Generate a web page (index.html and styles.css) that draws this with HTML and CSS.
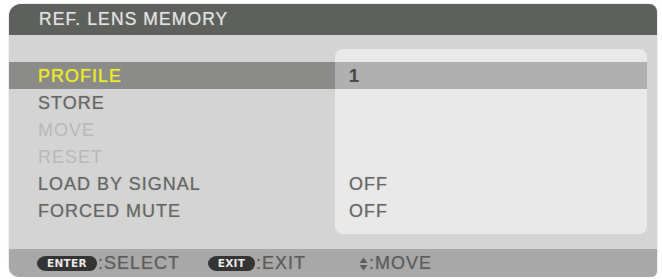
FILE: index.html
```html
<!DOCTYPE html>
<html>
<head>
<meta charset="utf-8">
<link rel="stylesheet" href="styles.css">
</head>
<body>
<div class="osd">
  <div class="title">REF. LENS MEMORY</div>
  <div class="content">
    <div class="labels">
      <div class="row label sel">PROFILE</div>
      <div class="row label">STORE</div>
      <div class="row label off">MOVE</div>
      <div class="row label off">RESET</div>
      <div class="row label">LOAD BY SIGNAL</div>
      <div class="row label">FORCED MUTE</div>
    </div>
    <div class="values">
      <div class="row value sel">1</div>
      <div class="row value"></div>
      <div class="row value"></div>
      <div class="row value"></div>
      <div class="row value">OFF</div>
      <div class="row value">OFF</div>
    </div>
  </div>
  <div class="footer">
    <span class="key key-enter">ENTER</span><span class="hint">:SELECT</span>
    <span class="key key-exit">EXIT</span><span class="hint">:EXIT</span>
    <span class="move-icon"><svg width="9" height="14" viewBox="0 0 9 14"><path d="M0.5 6 L4.5 0.5 L8.5 6 Z M0.5 8 L4.5 13.5 L8.5 8 Z" fill="#5c5c5c"/></svg></span><span class="hint">:MOVE</span>
  </div>
</div>
</body>
</html>
```
FILE: styles.css
```css
html, body {
  margin: 0;
  padding: 0;
  background: #ffffff;
}
body {
  padding: 4px 0 0 9px;
  font-family: "Liberation Sans", Arial, sans-serif;
}
.osd {
  width: 648px;
  height: 273px;
  border-radius: 12px 8px 6px 10px;
  overflow: hidden;
  background: #d3d4d3;
  display: flex;
  flex-direction: column;
  box-shadow: 0 0 2px rgba(0,0,0,0.25);
}
.title {
  height: 31px;
  flex: none;
  background: #5e605d;
  color: #e2e2e0;
  font-size: 17.5px;
  letter-spacing: 1.1px;
  line-height: 31px;
  padding-left: 30px;
  text-shadow: 0 0 1px rgba(230,230,230,0.6);
}
.content {
  height: 214px;
  flex: none;
  display: flex;
  padding: 14px 10px 0 0;
  box-sizing: border-box;
}
.labels {
  width: 326px;
  padding-top: 13px;
}
.values {
  width: 312px;
  height: 185px;
  background: #e9e9e9;
  border-radius: 8px;
  padding-top: 13px;
  box-sizing: border-box;
}
.row {
  height: 27px;
  line-height: 28px;
  font-size: 18px;
  letter-spacing: 1px;
  color: #666766;
  text-shadow: 0 0 1px rgba(100,100,100,0.5);
  white-space: nowrap;
}
.label {
  padding-left: 29px;
}
.label.sel {
  background: #8b8b8a;
  color: #ecec2a;
  text-shadow: 0 0 1px rgba(236,236,42,0.8);
}
.label.off {
  color: #b9b9b9;
  text-shadow: none;
}
.value {
  padding-left: 14px;
}
.value.sel {
  background: #b1b0b1;
  color: #4a4a4a;
  font-weight: bold;
}
.footer {
  flex: 1;
  background: #a8a8a8;
  display: flex;
  align-items: center;
  padding-left: 28px;
  padding-top: 1px;
}
.hint {
  font-size: 18px;
  letter-spacing: 1px;
  color: #5c5c5c;
  text-shadow: 0 0 1px rgba(90,90,90,0.5);
}
.key {
  height: 15px;
  background: #343434;
  color: #e8e8e8;
  font-family: "DejaVu Sans", sans-serif;
  font-weight: bold;
  font-size: 10.5px;
  line-height: 15px;
  border-radius: 9px 7px 7px 9px / 7.5px;
  display: inline-flex;
  justify-content: center;
  letter-spacing: 0.3px;
}
.key-enter {
  width: 60px;
  margin-right: 1px;
}
.key-exit {
  width: 47px;
  margin-left: 28px;
  margin-right: 1px;
}
.move-icon {
  margin-left: 53px;
  display: inline-flex;
  align-items: center;
  margin-right: 1px;
}
```
